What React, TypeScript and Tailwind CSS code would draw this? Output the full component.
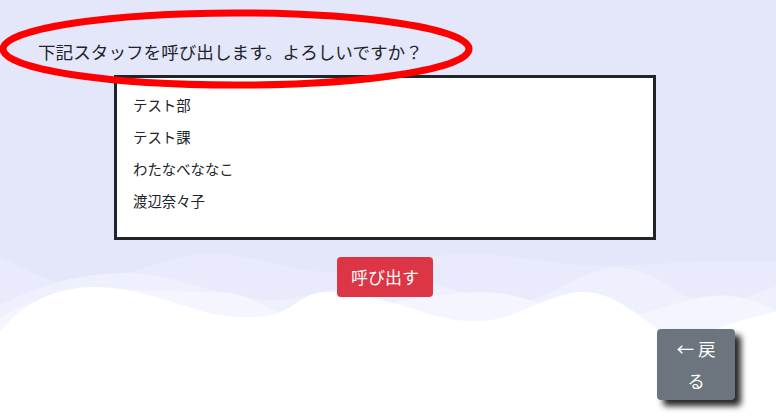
import React from "react";

const items = ["テスト部", "テスト課", "わたなべななこ", "渡辺奈々子"];

function Waves() {
  return (
    <svg
      className="absolute left-0 top-0"
      width="776"
      height="420"
      viewBox="0 0 776 420"
    >
      <path
        d="M0,257 C25,268 45,283 75,283 C120,283 165,254 210,254 C255,254 290,272 330,272 C375,272 420,254 465,254 C515,254 560,266 600,266 C650,266 710,258 776,262 L776,420 L0,420 Z"
        fill="#e9ebfc"
      />
      <path
        d="M0,305 C40,285 80,273 125,273 C175,273 215,296 260,300 C300,304 340,282 390,280 C440,278 470,300 510,302 C550,304 580,268 616,268 C660,268 680,303 710,303 C740,303 760,292 776,286 L776,420 L0,420 Z"
        fill="#eef0fd"
      />
      <path
        d="M0,318 C30,300 60,290 100,290 C150,290 180,292 217,292 C250,292 265,310 290,315 C330,320 420,292 480,292 C530,292 560,318 610,318 C650,318 690,292 730,296 C750,298 765,305 776,310 L776,420 L0,420 Z"
        fill="#f4f5fe"
      />
      <path
        d="M0,332 C25,300 60,287 95,287 C135,287 170,302 205,312 C230,318 255,319 275,314 C295,308 305,292 325,292 C355,292 385,300 410,308 C440,318 470,326 500,318 C530,310 555,292 583,292 C615,292 640,318 660,330 C690,345 730,320 776,312 L776,420 L0,420 Z"
        fill="#ffffff"
      />
    </svg>
  );
}

export default function App() {
  return (
    <div
      className="relative w-[776px] h-[420px] overflow-hidden bg-[#e4e6fa] text-[#212529]"
      style={{ fontFamily: '"Noto Sans CJK JP", "Noto Sans", sans-serif' }}
    >
      <Waves />
      <div className="relative flex flex-col">
        <div className="pl-[38px] pt-[39px] text-[17.6px] leading-[26px]">
          下記スタッフを呼び出します。よろしいですか？
        </div>
        <div className="ml-[114px] mt-[10px] w-[542px] h-[165px] border-[3px] border-[#212529] bg-white pt-[11px] pl-[16px]">
          {items.map((t) => (
            <div key={t} className="h-[32px] leading-[32px] text-[14.4px]">
              {t}
            </div>
          ))}
        </div>
        <div className="ml-[114px] w-[542px] mt-[17px] flex justify-center">
          <button className="w-[96px] h-[40px] rounded-[4px] bg-[#dc3545] text-white text-[17px] leading-[40px]">
            呼び出す
          </button>
        </div>
      </div>
      <svg
        className="absolute left-0 top-0 pointer-events-none"
        width="776"
        height="420"
        viewBox="0 0 776 420"
      >
        <ellipse
          cx="236"
          cy="49"
          rx="233"
          ry="36"
          fill="none"
          stroke="#ff0000"
          strokeWidth="7"
        />
      </svg>
      <button className="absolute left-[657px] top-[329px] w-[78px] h-[71px] rounded-[4px] bg-[#6c757d] text-white text-[17.6px] leading-[32px] px-[14px] shadow-[6px_6px_6px_rgba(0,0,0,0.85)]">
        ← 戻る
      </button>
    </div>
  );
}
